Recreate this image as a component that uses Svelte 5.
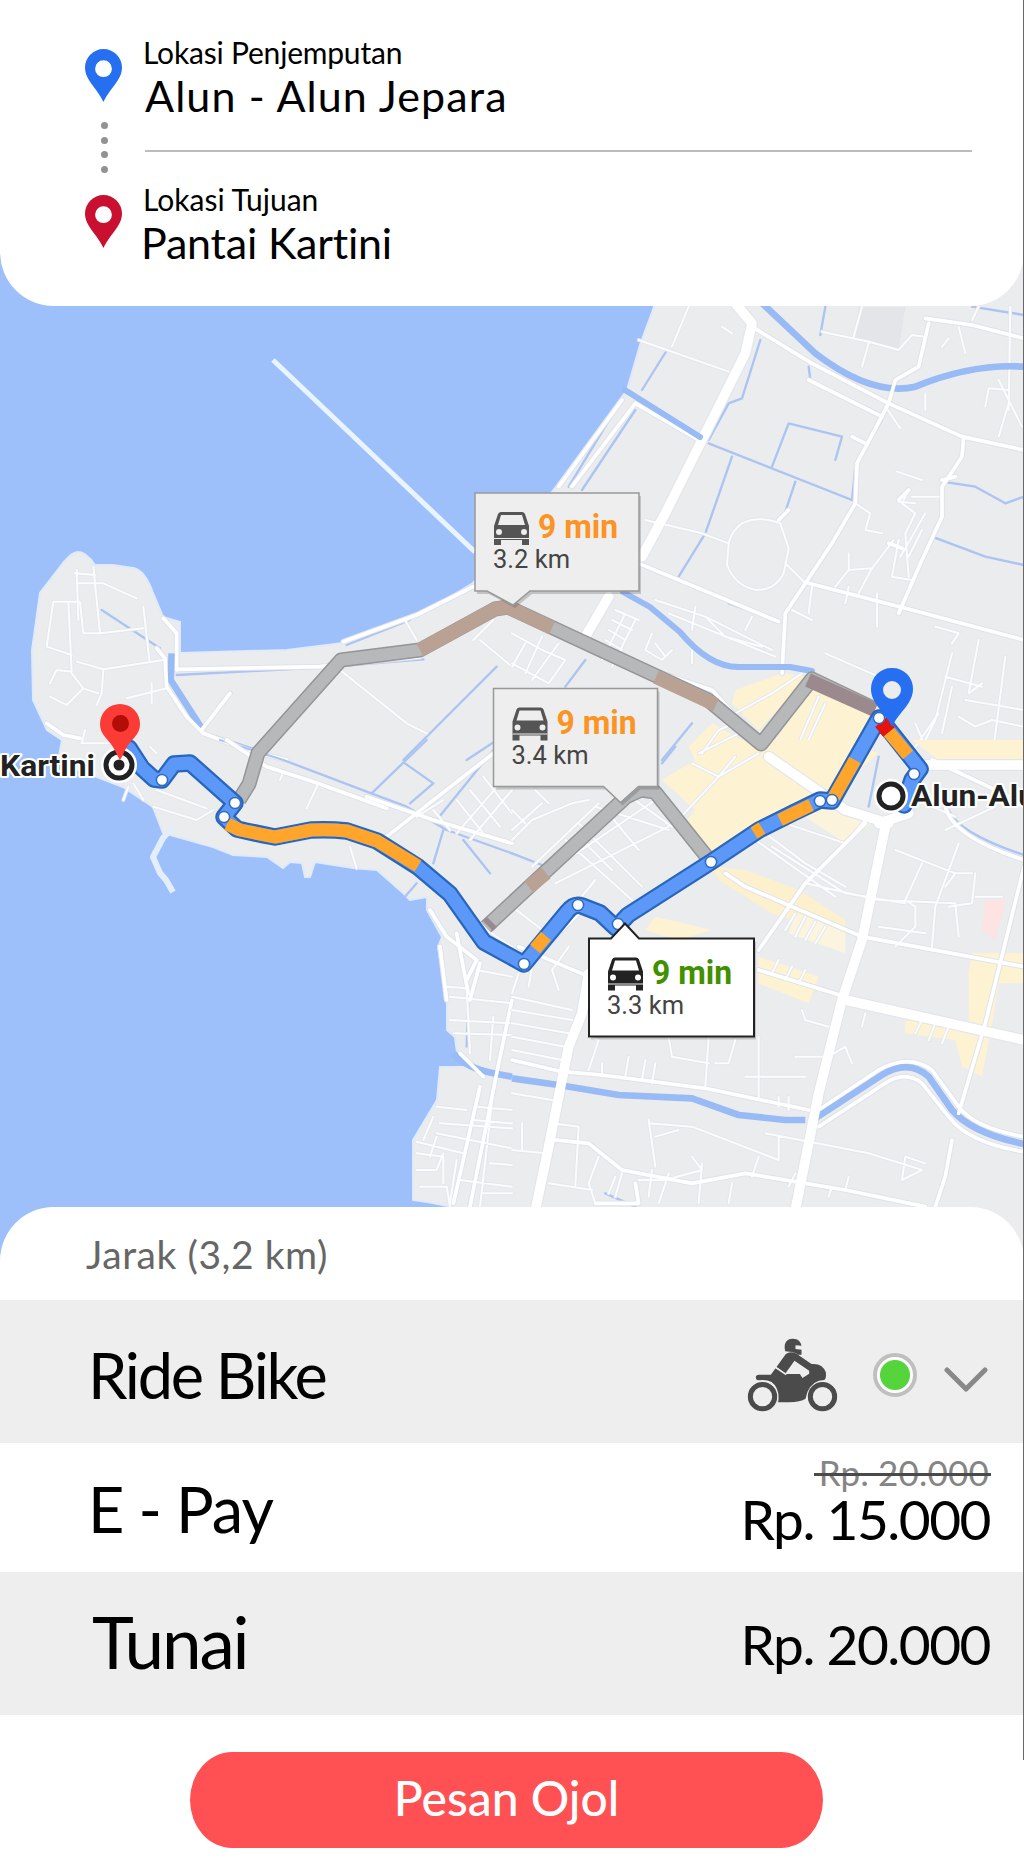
<script>
  // Each tile is drawn in its own 3x coordinate space and scaled down into the map.
  const tiles = [
    {
      at: 'translate(0 300) scale(.33333)',
      areas: [],
      thin: 'M230 810L235 960M280 800L300 1000M230 850H310L410 895M160 905H240L250 1000H300L430 985M205 905L215 1115M160 905L140 1040L215 1065M430 920L448 1080M230 1085L310 1108L490 1080M310 1108L305 1180L290 1215M215 1115L170 1110L150 1150M215 1120L250 1165L200 1215L150 1190M380 1195L500 1165M455 1150V1210M225 820L285 825M250 1165L295 1180M1020 1110L1220 1270L1280 1300M1440 1020L1536 1100M1480 960L1420 1020M255 1290L245 1330H330M1215 960L1250 1020M450 1340L470 1360',
      minor: 'M490 955L530 1000V1110M470 1045L495 1075L500 1160L560 1250L610 1300L740 1350L860 1380M530 1108L960 1100L1260 1070M605 1290L690 1180M1030 1025L1250 945L1420 860M140 1270L190 1305L240 1315',
      major: '',
      canal: 'M305 930L480 1045M530 1125L960 1103L1270 1078M620 1300L860 1380M1490 1100L1210 1380M1536 1290L1400 1380M1040 1035L1230 960',
      river: 'M515 1060L512 1140L605 1285'
    },
    {
      at: 'translate(512 300) scale(.33333)',
      areas: [
        ['M670 1170L810 1120L890 1130L740 1290L660 1210Z', '#fdf3d2'],
        ['M600 1270L760 1360L900 1170L1070 1240L1090 1290L980 1400H560L530 1340Z', '#fdf3d2'],
        ['M1370 1330H1536V1380H1360Z', '#fdf3d2'],
        ['M1040 20L1180 20L1160 150L1030 110Z', '#e3e5e8']
      ],
      thin: 'M380 120L650 215M480 140L530 20M930 95L1070 125L1160 150L1200 105L1240 110M1050 20L1025 110M1070 130L1050 200M1340 80L1360 160M1290 140L1310 115M1420 320L1430 265L1490 270M1495 20L1490 330M1460 240L1530 380M1490 310L1460 410M1240 280V330M1120 320L1165 385M1155 515L1230 540M1190 570L1170 610L1210 640L1180 700L1190 830M1200 590H1280M1160 605L1210 610M1030 610L1075 640L1060 690L1110 700M1145 720L1080 805L1040 880M1080 805L1010 810L970 860M1010 810V760M1240 640L1165 770M1160 720L1140 830L1200 840M1230 690L1190 770M400 660L570 700L650 730M690 670Q740 645 805 670L830 745L815 820Q790 870 735 870Q670 860 645 795L650 730Q660 690 690 670M820 790L880 850M1095 880V980M1010 860L1000 910M900 860L890 940M840 930L900 960M550 920L540 990M430 900L580 950L780 1050M470 940L790 1070M580 950L640 1010L750 1040M720 950L700 990M310 930L380 960M300 960L360 990M290 990L340 1020M280 1020L330 1050M340 940L270 1080M370 960L300 1100M0 1000L90 1050L160 1080L110 1150L0 1090M40 1030L0 1100M90 1010L40 1120M140 1030L60 1140M420 1000L400 1050L450 1080L480 1050M430 1030L460 1070M540 1050V1090M670 1240L780 1180L870 1120M920 1190L860 1330M940 1210L880 1340M570 1360L620 1290L690 1260L760 1340M560 1360L680 1300M1320 1060L1270 1260L1240 1320M1300 1130L1410 1160M1270 980L1340 1000L1320 1030M1400 1020L1370 1180L1410 1150M1480 1070L1440 1380M1360 1200L1536 1230M1340 1250L1390 1280L1440 1260L1536 1280M1320 1160L1290 1300M1210 1270L1240 1340M940 1060L1100 1130M1280 1240L1210 1340M630 80L660 100M1380 60L1400 20',
      minor: 'M720 80L900 190L1130 310L1350 410L1536 450M890 240L1110 350M1240 55L1380 75L1536 115M1250 70L1220 200L1150 240L1130 310L1035 490L1030 610L960 730L820 940L810 1120M1355 410L1350 470L1290 560V650L1230 780L1160 940M890 850L1200 930L1536 1020M380 790L800 965M370 310L560 420M370 310L180 560M330 300L140 560M390 1100L600 1170L700 1280M1020 410L1060 430M1160 600L1190 570M1130 730L1170 745M1290 540L1330 530M800 660L830 630',
      major: 'M670 10L720 70L700 160L580 400L460 640L390 770M290 890L220 1010',
      canal: 'M590 430L1020 600L1030 500L1110 360M590 420L650 310L690 295L745 120M370 330L210 570M310 330L170 560M660 470L580 700L500 830M850 545L815 650M780 500L830 370L990 410L970 480M465 150L390 270M940 20L925 105M890 200L895 240L1100 340M1290 545L1390 560L1480 610L1536 590M1260 710L1420 770L1536 795M1380 20L1536 45M650 910L780 955M160 1160L220 1080M1160 1290L1210 1380M540 1270L450 1380',
      river: 'M740 0L910 160Q1080 290 1210 260Q1380 190 1536 200'
    },
    {
      at: 'translate(0 740) scale(.33333)',
      areas: [],
      thin: 'M400 130L430 180M370 180L385 140M460 200L590 240L640 210M470 150L620 205M810 80L850 95L840 120M955 130L920 205M1050 320L1070 385M1300 210L1350 270M1250 230L1330 180M1430 690L1536 710M1340 740L1400 745L1410 940M1350 770L1536 790M1350 840L1536 850M1360 880L1536 885M1480 830L1470 960M1310 1100L1400 1110M1320 1150L1536 1165M1310 1180L1536 1225M1310 1190L1290 1250M1250 1205L1390 1240M1250 1290H1310L1330 1240M1260 1340H1340L1350 1400M1380 1320L1536 1340M1480 1050L1440 1400M1430 1100L1536 1110M1420 1140L1536 1150M1470 1270L1536 1275M1250 1240L1330 1250V1330M1300 1130L1270 1200M1536 1360H1450M1370 1260L1350 1390M1370 180L1450 280M1410 150L1500 260M1450 110L1536 220M1370 280L1500 130M1410 300L1536 150M1460 570L1536 620',
      minor: 'M680 0L800 80L940 125L1160 205M1100 170L1300 240L1536 310M1480 40L1160 290M1290 510L1340 590L1430 660L1400 720M1320 620L1340 780M1440 670L1410 780M1370 580L1405 760M1380 940L1450 1010M1440 1040L1360 1390M1536 780L1490 1000L1410 1400',
      major: '',
      canal: 'M660 0L850 60L1100 155L1220 200L1340 270L1536 340M1280 0L1115 160M1215 70L1300 130L1230 190M1330 270L1300 370M1390 300L1470 400M1370 580L1405 740M1405 780L1400 920M1480 30L1310 240M1250 430L1215 470',
      river: 'M1360 940Q1400 985 1480 1000L1536 1010'
    },
    {
      at: 'translate(512 740) scale(.33333)',
      areas: [
        ['M450 120L650 0H980L1100 40L940 170L600 340L500 270L550 210Z', '#fdf3d2'],
        ['M600 380L700 390L860 450L1000 540V590L780 520L620 420Z', '#fdf1cd'],
        ['M430 530L600 570L500 600L400 570Z', '#fdf3d2'],
        ['M740 650L920 710L890 790L740 730Z', '#fdf3d2'],
        ['M1180 840L1370 860L1370 700L1380 640L1536 640V730H1460L1440 850L1410 1010L1350 980L1330 900L1180 880Z', '#fdf3d2'],
        ['M1200 0L1536 0V60H1280Z', '#fdf3d2'],
        ['M1420 480H1480L1450 600L1410 570Z', '#fde3e2'],
        ['M900 190L1080 250L1000 310L880 230Z', '#fbf3dc'],
        ['M850 520L1000 570V640L830 580Z', '#fbf4de']
      ],
      thin: 'M0 500L130 600M160 300L360 480M200 250L390 440M250 200L470 270M340 160L480 260M60 380L260 190M90 410L430 180M130 430L470 260M190 280L300 390M290 220L380 330M0 300L60 240L180 190L230 180M0 270L90 190M40 250L0 210M110 190L70 150M250 420L200 480M540 70L620 110L670 50M480 260L620 110L740 40M780 320L1000 460L1180 490M880 430L1100 480L1330 490M760 280L880 370L1000 440M730 300L970 470M820 250L1000 310L1060 240M1150 330L1330 400L1380 400M1230 370L1180 480M1340 310L1270 500L1260 620M1180 480L1210 500V560L1150 620M1330 490L1340 590M1100 560L1240 580M1390 400L1380 490L1310 500M1300 270L1450 200M1260 200L1330 230M1300 440L1330 400M1390 470H1470M820 570L850 520M850 590L880 530M880 600L910 545M910 610L940 560M780 700L800 660M820 720L840 680M860 730L880 690M1210 880L1230 840M1250 900L1270 850M1290 910L1310 860M0 770L180 810M0 810L180 840M0 850L170 880M0 890L160 920M0 930L150 960M20 700L0 760M60 680L50 740M120 690L140 750M170 620L120 690M230 890L260 900L230 990M270 970V1010M350 950L340 1010M400 960L390 1020M430 970L420 1030M470 890L480 950L590 970M590 890L580 1040M610 970H650L670 900M740 890V1080M700 1010L880 1010M850 950H950L1000 920L1020 970M870 810L880 840L950 860M1060 820L1050 860M410 1140L430 1280M410 1150L540 1160L800 1260M430 1190L500 1170M760 1180L1070 1240L1230 1290L1170 1320L1180 1250L1240 1270M800 1190V1260M120 1150L200 1160L190 1340M110 1330L240 1350M260 1250L230 1330L250 1390M310 1310L290 1360M330 1300L310 1370M420 1290L410 1370M470 1300L440 1390M380 1320H460L570 1290L540 1250M570 1270L560 1390M660 1330L650 1390M740 1250L720 1310M1010 1310L1000 1350M960 1340L950 1370M0 1060L120 1080M30 1150V1230M0 1230L100 1240M830 1340L850 1300M800 1070V1100M830 1070V1110',
      minor: 'M0 960L150 995L270 1005L580 1045L890 1110M130 1200L230 1210L330 1290L540 1330L700 1300L1000 1350L1240 1400M20 620L230 710M640 400L700 440L1050 590L1536 680M740 690L1000 770M1060 250L880 430L740 630M1536 380L1420 850L1340 1120M1320 1200L1300 1310L1270 1400M250 1390L380 1390L370 1330M920 1110L1100 990Q1190 940 1260 990L1340 1100Q1390 1165 1536 1190M920 1160L1120 1030Q1180 990 1230 1030L1310 1130Q1370 1210 1536 1235M1300 200Q1320 290 1536 360M120 600L220 500M1260 60L1536 190',
      major: 'M230 700L210 820L170 920L110 1220L70 1410M1120 260L1050 600L990 780L920 1060L850 1410M770 50L1000 210L1130 250M1000 780L1536 900M1240 75H1536M1100 250L1190 220',
      canal: 'M0 340L90 375M1310 210Q1340 280 1536 345M280 1360L370 1400M1100 50L1070 200M450 70L490 20',
      river: 'M0 1015L140 1035L320 1065L540 1075L680 1125L820 1140H880M910 1135L1110 1005Q1190 955 1250 1010L1320 1110Q1380 1180 1536 1212'
    }
  ];

  const route = 'M129 748L142 768L154 779L162 780L174 764L190 763L235 803L224 817L237 829Q254 833 275 837L311 830Q330 829 347 831L377 841L418 867L450 894L484 942L524 964L567 912Q574 903 582 906L600 913L616 928L628 915L711 862L759 830L795 812L820 800L832 801L879 718L886 726L920 769L912 780L904 805';
  const jams = [
    'M227 824L240 830L275 837L311 830Q330 829 347 831L377 841L418 866',
    'M535 949L546 936',
    'M754 833L762 828',
    'M780 820L811 805',
    'M834 797L855 760',
    'M888 731L908 755'
  ];
  const stops = [
    [162, 780], [235, 803], [224, 817], [524, 964], [578, 905], [618, 924],
    [711, 862], [820, 801], [832, 800], [879, 718], [914, 774]
  ];
  const callouts = [
    { x: 475, y: 493, time: '9 min', km: '3.2 km', tone: 'slow', shape: 'M0 0H164V98H55L38 112L12 98H0Z' },
    { x: 493.5, y: 688.5, time: '9 min', km: '3.4 km', tone: 'slow', shape: 'M0 0H164V98H145L127 114L110 98H0Z' },
    { x: 589, y: 938.5, time: '9 min', km: '3.3 km', tone: 'best', shape: 'M0 0H22L36 -15L50 0H165V98H0Z' }
  ];
</script>

{#snippet pin(tone)}
  <svg class="pin {tone}" viewBox="0 0 37 53" aria-hidden="true">
    <path fill-rule="evenodd" d="M18.5 0A18.5 18.5 0 0 0 0 18.5C0 31 12 39 18.5 53C25 39 37 31 37 18.5A18.5 18.5 0 0 0 18.5 0ZM18.5 11.3A8.4 8.4 0 1 1 18.5 28.1A8.4 8.4 0 0 1 18.5 11.3Z" />
  </svg>
{/snippet}

<main class="screen">
  <header class="trip">
    <div class="rail">
      {@render pin('blue')}
      <div class="dots"><i></i><i></i><i></i><i></i></div>
      {@render pin('red')}
    </div>
    <div class="places">
      <div class="label pickup">Lokasi Penjemputan</div>
      <div class="place from">Alun - Alun Jepara</div>
      <div class="divider"></div>
      <div class="label drop">Lokasi Tujuan</div>
      <div class="place to">Pantai Kartini</div>
    </div>
  </header>

  <svg class="map" viewBox="0 246 1024 1020" role="img" aria-label="Peta rute">
    <rect y="246" width="1024" height="1020" fill="#9dc0fa" />
    <path class="land" d="M658 240L654 307L640 345L627 390L552 492L473 583L417 617L343 643L287 650L180 653V622L163 617L153 593Q145 570 133 568L113 565H95Q86 552 78 552Q72 552 63 563L40 593L32 650L33 700L47 730L62 740L58 762L123 787L153 807L163 833L213 847L233 855L267 857L283 868L290 862L302 863L305 877H310L315 862L353 868L377 870L403 893L410 900L427 897V910L442 937L438 947L447 1000V1030L455 1037L457 1053L480 1067H440L437 1100L413 1140V1200L433 1203L467 1210V1270H1024V240Z" />
    <path class="pier" d="M273 360L475 552" />
    <path class="jetty" d="M174 826L163 838L153 857L160 873L166 880L173 892" />
    {#each tiles as t}
      <g transform={t.at}>
        {#each t.areas as [d, fill]}<path {d} {fill} />{/each}
        <path class="line canal" d={t.canal} />
        <path class="line thin-casing" d={t.thin} />
        <path class="line casing" d={t.minor} />
        <path class="line major-casing" d={t.major} />
        <path class="line thin" d={t.thin} />
        <path class="line river" d={t.river} />
        <path class="line minor" d={t.minor} />
        <path class="line major" d={t.major} />
      </g>
    {/each}
    <path class="line channel" d="M623 592L650 607L680 632Q710 668 740 667H790L812 671M625 390L700 437" />

    <g class="alt edge">
      <path d="M239 800L249 784L258 753L341 660L420 650L495 609L508 607L708 700L761 744L812 679L875 709" />
      <path d="M486 927L626 797L641 790L655 792L711 862" />
    </g>
    <g class="alt">
      <path d="M239 800L249 784L258 753L341 660L420 650L495 609L508 607L708 700L761 744L812 679L875 709" />
      <path d="M486 927L626 797L641 790L655 792L711 862" />
    </g>
    <g class="alt tan">
      <path d="M420 650L495 609L508 607L552 628" />
      <path d="M656 677L716 705" />
      <path class="plum" d="M808 680L875 710" />
      <path d="M529 887L546 873" />
      <path class="plum" d="M488 926L492 922" />
    </g>

    <path class="route edge" d={route} />
    <path class="route" d={route} />
    {#each jams as d}<path class="jam" {d} />{/each}
    <path class="jam stop" d="M881 722L889 732" />
    {#each stops as [cx, cy]}<circle class="node" {cx} {cy} r="5.6" />{/each}

    {#each callouts as c}
      <g class="callout {c.tone}" transform="translate({c.x} {c.y})">
        <path class="shade" d={c.shape} transform="translate(2 3)" />
        <path class="box" d={c.shape} />
        <g class="car" transform="translate(18 19)">
          <path fill-rule="evenodd" d="M8 0H29Q31 0 32 2L36 14V33H29V28H8V33H1V14L5 2Q6 0 8 0ZM8 3L5 13H32L29 3ZM6 17A3 3 0 1 0 6 23A3 3 0 1 0 6 17ZM31 17A3 3 0 1 0 31 23A3 3 0 1 0 31 17Z" />
          <path class="bumper" d="M1 26.5H36" />
        </g>
        <text class="time" x="63" y="45" textLength="80" lengthAdjust="spacingAndGlyphs">{c.time}</text>
        <text class="km" x="18" y="75" textLength="77" lengthAdjust="spacingAndGlyphs">{c.km}</text>
      </g>
    {/each}

    <circle class="halo" cx="119" cy="765" r="13" />
    <circle class="end" cx="119" cy="765" r="13" />
    <circle cx="119" cy="765" r="5.5" fill="#222" />
    <path d="M120 704A20 20 0 0 0 100 724C100 737 112 740 117 755L120 760L123 755C128 740 140 737 140 724A20 20 0 0 0 120 704Z" fill="#fb3b35" />
    <circle cx="120.500" cy="723.500" r="8.500" fill="#b20d08" />
    <text class="name" x="0" y="776" textLength="95" lengthAdjust="spacingAndGlyphs">Kartini</text>

    <circle class="halo" cx="891" cy="796" r="12" />
    <circle class="end" cx="891" cy="796" r="12" />
    <text class="name" x="911" y="806" textLength="125" lengthAdjust="spacingAndGlyphs">Alun-Alu</text>
    <path fill-rule="evenodd" d="M892 668A20.500 20.500 0 0 0 871 689C871 704 886 713 892 727C898 713 913 704 913 689A20.500 20.500 0 0 0 892 668ZM892 681A9 9 0 1 1 892 699A9 9 0 0 1 892 681Z" fill="#266ff0" />
  </svg>

  <section class="panel">
    <div class="distance"><span>Jarak (3,2 km)</span></div>
    <div class="row ride">
      <span class="title">Ride Bike</span>
      <div class="tools">
        <svg class="bike" viewBox="148 116 272 222" aria-hidden="true">
          <g fill="none" stroke="#4b4b4b" stroke-width="15">
            <circle cx="194" cy="292" r="36.500" />
            <circle cx="374" cy="292" r="36.500" />
          </g>
          <g fill="#4b4b4b">
            <path d="M311 139L293 138V149L311 151V166H300Q292 158 276 157L262 156Q257 132 269 123Q280 116 296 120Q308 125 311 139Z" />
            <path d="M236 203L264 164Q277 154 296 163L341 194Q374 191 384 219Q386 239 379 242Q345 243 329 277L323 298Q308 308 274 309H241Q247 267 221 248Q205 239 182 243Q174 243 174 234Q174 226 183 226H219L233 207L264 224H306L314 236L334 223V214L290 184L263 222Z" />
          </g>
          <path d="M234 205L265 226" stroke="#eee" stroke-width="4" />
        </svg>
        <span class="status"></span>
        <svg class="chevron" viewBox="0 0 44 26" aria-hidden="true"><path d="M3 3L22 22L41 3" /></svg>
      </div>
    </div>
    <div class="row epay">
      <span class="title">E - Pay</span>
      <div class="prices">
        <span class="old">Rp. 20.000</span>
        <span class="price now">Rp. 15.000</span>
      </div>
    </div>
    <div class="row cash">
      <span class="title">Tunai</span>
      <span class="price">Rp. 20.000</span>
    </div>
    <div class="action"><button>Pesan Ojol</button></div>
  </section>
  <div class="edge-line"></div>
</main>

<style>
  :global(body) { margin: 0; background: #fff; }
  .screen {
    position: relative;
    width: 1024px;
    height: 1875px;
    overflow: hidden;
    background: #fff;
    color: #000;
    font-family: Lato, "Open Sans", sans-serif;
    white-space: nowrap;
  }
  .trip {
    position: relative;
    z-index: 1;
    box-sizing: border-box;
    height: 306px;
    display: flex;
    gap: 21px;
    padding-right: 52px;
    padding-left: 85px;
    background: #fff;
    border-radius: 0 0 54px 54px;
  }
  .rail { display: flex; flex-direction: column; align-items: center; padding-top: 49px; }
  .pin { display: block; width: 37px; height: 53px; }
  .blue { fill: #266ff0; }
  .red { fill: #c91030; }
  .dots { display: flex; flex-direction: column; gap: 7.500px; margin: 20px 0 22px 1px; }
  .dots i { width: 7px; height: 7px; border-radius: 50%; background: #929292; }
  .places { flex: 1; padding-top: 34px; }
  .label { font-size: 30px; line-height: 36px; }
  .place { font-size: 43px; line-height: 52px; }
  .from { padding-left: 2px; letter-spacing: 1.100px; }
  .to { margin-left: -2px; letter-spacing: -0.200px; }
  .pickup { letter-spacing: -0.200px; }
  .divider { height: 2px; margin: 28px 0 29px 2px; background: #bcbcbc; }

  .map { display: block; width: 1024px; height: 1020px; margin: -60px 0 -59px; }
  .land { fill: #ebecee; stroke: #e0eafa; stroke-width: 2; }
  .line { fill: none; stroke-linejoin: round; stroke-linecap: round; }
  .canal { stroke: #abc4f1; stroke-width: 7; }
  .river { stroke: #98baf5; stroke-width: 20; stroke-linecap: butt; }
  .channel { stroke: #98baf5; stroke-width: 6; }
  .thin-casing { stroke: #e3e6eb; stroke-width: 11; }
  .casing { stroke: #dfe3ea; stroke-width: 17; }
  .major-casing { stroke: #e2e6ec; stroke-width: 36; }
  .thin { stroke: #fbfcfd; stroke-width: 6; }
  .minor { stroke: #fff; stroke-width: 11; }
  .major { stroke: #fff; stroke-width: 29; }
  .pier { fill: none; stroke: #e9f4ff; stroke-width: 5; }
  .jetty { fill: none; stroke: #e4eef8; stroke-width: 6; stroke-linejoin: round; }
  .alt path { fill: none; stroke: #b6b8b9; stroke-width: 12; stroke-linejoin: round; }
  .alt.edge path { stroke: #939596; stroke-width: 15; }
  .alt.tan path { stroke: #b9a193; stroke-width: 14; }
  .alt.tan .plum { stroke: #9a8a8d; }
  .route { fill: none; stroke: #5c98f7; stroke-width: 13; stroke-linejoin: round; stroke-linecap: round; }
  .route.edge { stroke: #2866bd; stroke-width: 17.500; }
  .jam { fill: none; stroke: #ffa52b; stroke-width: 13; stroke-linejoin: round; }
  .stop { stroke: #e5130d; stroke-width: 15; }
  .node { fill: #fff; stroke: #2f6cc0; stroke-width: 1.500; }
  .callout .shade { fill: #555; opacity: .28; }
  .callout .box { fill: #eee; stroke: #999; stroke-width: 1.500; }
  .callout.best .box { fill: #fff; stroke: #222; stroke-width: 2; }
  .car { fill: #555; }
  .best .car { fill: #222; }
  .bumper { fill: none; stroke: #eee; stroke-width: 1; }
  .time { font: 700 33px Roboto, sans-serif; fill: #fb9424; }
  .best .time { fill: #429000; }
  .km { font: 400 26px Roboto, sans-serif; fill: #444; }
  .name { font: 700 29px Roboto, sans-serif; fill: #222; stroke: #fff; stroke-width: 4; paint-order: stroke; stroke-linejoin: round; }
  .end { fill: #fff; stroke: #222; stroke-width: 5; }
  .halo { fill: #fff; stroke: #fff; stroke-width: 10; }

  .panel { position: relative; background: #fff; border-radius: 54px 54px 0 0; overflow: hidden; }
  .distance { height: 93px; padding-left: 86px; box-sizing: border-box; font-size: 39px; line-height: 95px; letter-spacing: 0.550px; color: #666; }
  .row { display: flex; justify-content: space-between; box-sizing: border-box; padding: 0 33px 0 88px; }
  .title { font-size: 63px; }
  .ride { height: 143px; align-items: center; padding-right: 36px; background: #eee; }
  .ride .title { line-height: 143px; padding-top: 5px; letter-spacing: -2.200px; }
  .tools { display: flex; align-items: center; padding-top: 7px; }
  .bike { width: 91px; height: 74px; }
  .status { box-sizing: border-box; width: 44px; height: 44px; margin: 0 27px 0 35px; border: 4px solid #bfbfbf; border-radius: 50%; background: radial-gradient(circle, #55d43b 14.500px, #fff 15.500px); }
  .chevron { width: 44px; height: 26px; margin-top: 9px; fill: none; stroke: #898989; stroke-width: 5; stroke-linecap: round; stroke-linejoin: round; }
  .epay { height: 129px; }
  .epay .title { line-height: 131px; letter-spacing: -1px; }
  .prices { display: flex; flex-direction: column; align-items: flex-end; padding-top: 10px; }
  .old { position: relative; font-size: 35px; line-height: 39px; color: #858585; padding: 0 2px 0 5px; letter-spacing: 0.200px; }
  .old::after { content: ""; position: absolute; left: 0; right: 0; top: 20px; height: 2.500px; background: #4a4a4a; }
  .price { font-size: 55px; letter-spacing: -1.500px; margin-right: 1px; }
  .now { line-height: 54px; }
  .cash { height: 143px; background: #eee; }
  .cash .title { font-size: 71px; line-height: 140px; padding-left: 4px; letter-spacing: -2.100px; }
  .cash .price { line-height: 144px; }
  .action { display: flex; justify-content: center; padding: 37px 11px 27px 0; }
  button { width: 633px; height: 96px; padding: 0 0 4px; border: 0; border-radius: 42px / 48px; background: #ff5053; color: #fff; font: 500 48px/90px Lato, sans-serif; }
  .edge-line { position: absolute; z-index: 2; top: 0; right: 0; width: 1.500px; height: 1760px; background: #696969; }
</style>
